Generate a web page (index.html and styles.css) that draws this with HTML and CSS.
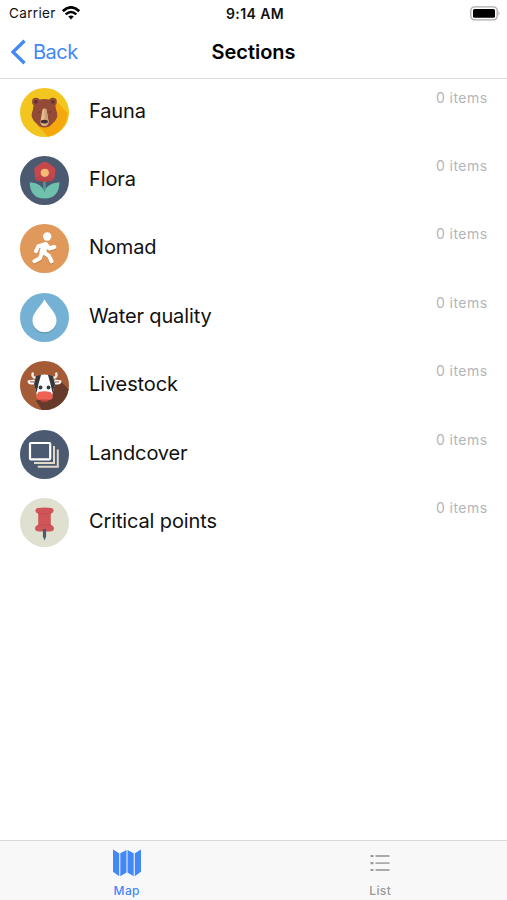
FILE: index.html
```html
<!DOCTYPE html>
<html lang="en">
<head>
<meta charset="utf-8">
<title>Sections</title>
<link rel="stylesheet" href="styles.css">
</head>
<body>
<div class="app">
  <div class="status">
    <div class="carrier"><span>Carrier</span>
      <svg width="18" height="14" viewBox="0 0 18 14"><path d="M.8 5.200Q9-2.400 17.200 5.200" fill="none" stroke="#000" stroke-width="2.800"/><path d="M3.700 8.400Q9 3.600 14.300 8.400" fill="none" stroke="#000" stroke-width="2.500"/><path d="M6.200 10.600Q9 8.300 11.800 10.600L9 13.400z"/></svg>
    </div>
    <div class="clock">9:14 AM</div>
    <svg class="battery" width="31" height="15" viewBox="0 0 31 15"><rect x=".8" y=".8" width="26.4" height="13" rx="3.7" fill="#fff" stroke="#aaa" stroke-width="1.3"/><rect x="3" y="3" width="22" height="8.7" rx="1.5"/><path d="M28.500 5q2.200 2.300 0 4.600z" fill="#aaa"/></svg>
  </div>
  <header class="nav">
    <a class="back"><svg width="16" height="26" viewBox="0 0 16 26"><path d="M14.500 1.700 3 13 14.500 24.300" fill="none" stroke="#4388f7" stroke-width="3.300"/></svg><span>Back</span></a>
    <h1>Sections</h1>
    <span></span>
  </header>
  <main class="list">
    <div class="row">
      <svg class="icon" viewBox="0 0 49 49"><circle cx="24.5" cy="24.5" r="24.5" fill="#f2c51f"/><path d="M34 11 47.500 25A24.500 24.500 0 0 1 28 48.700L17 37z" fill="#f5a80c"/><g fill="#934b37"><circle cx="16" cy="13.700" r="4"/><circle cx="32.800" cy="13.700" r="4"/><path d="M24.500 11C33.500 11 35.500 14.500 36 21.500q2 5 1 8-1.500 4-5 6.500Q29.500 39.500 24.500 39.500T17 36Q13.500 33.500 12 29.500q-1-3 1-8C13.500 14.500 15.500 11 24.500 11z"/></g><circle cx="16" cy="13.900" r="1.800" fill="#5e3434"/><circle cx="32.800" cy="13.900" r="1.800" fill="#5e3434"/><path d="M22.500 21.500q2-2 4 0L28.600 34q-.5 4-4.100 4T20.400 34z" fill="#e5bd91"/><path d="M24.500 20.500q1.200 0 2 1L28.600 34q-.5 4-4.100 4z" fill="#cfa17a"/><ellipse cx="24.300" cy="33.600" rx="3.600" ry="1.900" fill="#3c3030"/><circle cx="19" cy="24" r=".8" fill="#6a3430"/><circle cx="30" cy="24" r=".8" fill="#6a3430"/></svg>
      <span class="name">Fauna</span><span class="count">0 items</span>
    </div>
    <div class="row">
      <svg class="icon" viewBox="0 0 49 49"><circle cx="24.5" cy="24.5" r="24.5" fill="#4b5a71"/><path d="M24.500 24v16" stroke="#4b9991" stroke-width="2.800"/><path d="M9.700 26.300Q23 27.500 24.500 36.500 26 27.500 39.500 26.300 39 42.500 24.500 42.500T9.700 26.300z" fill="#6fc1ae"/><path d="M22 6.500q2.800-1.500 5.600 0l6.400 4.500q1.700 1.200 1.300 3.500l-.8 7q-.5 3-3.500 3.500l-4 .6q-2.200 1-4.400 0l-4-.6q-3-.5-3.500-3.500l-.8-7q-.4-2.300 1.300-3.500z" fill="#c5494c"/><path d="M24.800 16.500 34 22.500q-1 2.200-3.200 2.500l-6 1-6-1q-2.200-.3-3.200-2.500z" fill="#ae3c44" opacity=".4"/><circle cx="24.800" cy="16.800" r="4.100" fill="#f3bc72"/></svg>
      <span class="name">Flora</span><span class="count">0 items</span>
    </div>
    <div class="row">
      <svg class="icon" viewBox="0 0 49 49"><circle cx="24.5" cy="24.5" r="24.5" fill="#e0985b"/><g transform="translate(0 1)" fill="none" stroke="#c07e48" stroke-width="4" stroke-linecap="round" stroke-linejoin="round"><path id="walk" d="M26 20.200 18.300 22.200 16 27.300M26 20.200 29.300 24.500l5-1.500M24.500 20.500 22 28.500 20 34.200 14.400 37.300M23.500 28.200 29 32l2.500 5.300"/></g><g fill="none" stroke="#fff" stroke-width="4" stroke-linecap="round" stroke-linejoin="round"><use href="#walk"/><path d="M24.600 21.500 22.900 28" stroke-width="6.600"/></g><circle cx="27.200" cy="12.500" r="4.200" fill="#fff"/></svg>
      <span class="name">Nomad</span><span class="count">0 items</span>
    </div>
    <div class="row">
      <svg class="icon" viewBox="0 0 49 49"><circle cx="24.5" cy="24.5" r="24.5" fill="#75b1d4"/><path d="M24.500 7.200C28 14.500 36.600 20.500 36.600 28.200a12.100 12.100 0 0 1-24.200 0C12.400 20.500 21 14.500 24.500 7.200z" fill="#578ba8"/><path d="M24.500 6.200C28 13.500 36.600 19.500 36.600 27.200a12.100 12.100 0 0 1-24.200 0C12.400 19.500 21 13.500 24.500 6.200z" fill="#fff"/></svg>
      <span class="name">Water quality</span><span class="count">0 items</span>
    </div>
    <div class="row">
      <svg class="icon" viewBox="0 0 49 49"><circle cx="24.5" cy="24.5" r="24.5" fill="#a55b36"/><path d="M39 19 48.700 28A24.500 24.500 0 0 1 22 48.900L16 40z" fill="#673b2c"/><path d="M16.500 17Q11 16.500 13 11.500M32.500 17Q38 16.500 36 11.500" fill="none" stroke="#f4eddf" stroke-width="2.400"/><path d="M15 23Q7.500 25 7.500 19.500l7-1zM34 23q7.500 2 7.500-3.500l-7-1z" fill="#fff"/><path d="M10 21q3-.7 5 1M39 21q-3-.7-5 1" stroke="#d77d72" stroke-width="1.500" fill="none"/><path d="M16 15q8.500-3 17 0l2 7-3 13H17l-3-13z" fill="#fff"/><path d="M16 15q3-1.500 5-1l-2.500 9-2 9-2.500-9zM33 15q-3-1.500-5-1l2.500 9 2 9 2.500-9z" fill="#34373c"/><circle cx="20.500" cy="26.500" r="1.900" fill="#34373c"/><circle cx="28.500" cy="26.500" r="1.900" fill="#34373c"/><path d="M18.500 31q6-1.500 12 0 5 6-.5 8H19q-5.500-2-.5-8z" fill="#ee6253"/><path d="M19.500 38.500h10q-1.500 2.500-5 2.500t-5-2.500z" fill="#bd443e"/></svg>
      <span class="name">Livestock</span><span class="count">0 items</span>
    </div>
    <div class="row">
      <svg class="icon" viewBox="0 0 49 49"><circle cx="24.5" cy="24.5" r="24.5" fill="#4b5a71"/><g fill="none" stroke-width="2"><path d="M17.800 36.700h20V19.500M14 33h20V16" stroke="#ded9c8"/><rect x="10" y="13" width="20.200" height="16.300" rx=".7" stroke="#fff" stroke-width="2.200"/></g></svg>
      <span class="name">Landcover</span><span class="count">0 items</span>
    </div>
    <div class="row">
      <svg class="icon" viewBox="0 0 49 49"><circle cx="24.5" cy="24.5" r="24.5" fill="#dfe0d0"/><path d="M17.500 10Q24.500 8.800 31.500 10q2.500 1 2 3-.5 2.200-2.700 2.700v11q3.200 1 3.200 4.300-.5 2.200-4 2.500H19q-3.500-.3-4-2.500 0-3.300 3.200-4.300v-11q-2.200-.5-2.700-2.700-.5-2 2-3z" fill="#d05558"/><path d="M18 15.200q6.500 1.500 13 0M18.200 27.200q6.300-1 12.600 0" fill="none" stroke="#b94850" opacity=".6"/><path d="M22.900 31h3.200v7.500L24.500 42.500 22.900 38.500z" fill="#4b5a71"/></svg>
      <span class="name">Critical points</span><span class="count">0 items</span>
    </div>
  </main>
  <nav class="tabs">
    <a class="tab active"><svg width="30" height="28" viewBox="0 0 30 28" fill="#4388f7"><path d="M1 .5 7.200 4.300V27.300L1 22.700zM8.300 4.300 14.500 1v22.500l-6.200 3.800zM15.500 1 21.700 4.300v23L15.500 23.500zM22.800 4.300 29 .5V22.700l-6.200 4.600z"/></svg><span>Map</span></a>
    <a class="tab"><svg width="30" height="28" viewBox="0 0 30 28"><path d="M5.500 7h3M5.500 14.200h3M5.500 21h3" stroke="#999" stroke-width="2.200"/><path d="M10.500 7h14M10.500 14.200h14M10.500 21h14" stroke="#aaa" stroke-width="1.800"/></svg><span>List</span></a>
  </nav>
</div>
</body>
</html>
```
FILE: styles.css
```css
* { box-sizing: border-box; }
body { margin: 0; background: #fff; color: #111; font-family: Inter, "Liberation Sans", sans-serif; }
svg { display: block; flex: none; }
.app { height: 900px; display: flex; flex-direction: column; overflow: hidden; }
.status { height: 26px; padding: 0 6px 0 9px; display: grid; grid-template-columns: 1fr auto 1fr; align-items: center; font-size: 13.5px; }
.carrier { display: flex; align-items: center; gap: 6px; letter-spacing: .35px; }
.clock { font-size: 14px; font-weight: 600; letter-spacing: .4px; }
.battery { justify-self: end; }
.nav { height: 53px; padding: 0 10px 1px; display: grid; grid-template-columns: 1fr auto 1fr; align-items: center; border-bottom: 1px solid #dcdcdc; }
.back { display: flex; align-items: center; gap: 7px; color: #4388f7; font-size: 20px; letter-spacing: -.5px; }
h1 { margin: 0; color: #000; font-size: 20px; font-weight: 600; letter-spacing: 0; }
.list { flex: 1; }
.row { height: 68.43px; padding: 8.5px 19.5px 0 20px; display: flex; align-items: flex-start; }
.icon { width: 49px; height: 49px; }
.name { flex: 1; margin-left: 20px; line-height: 47px; font-size: 20px; letter-spacing: -.13px; }
.count { font-size: 14px; line-height: 19px; letter-spacing: .45px; color: #b5b5b8; }
.tabs { height: 60px; display: flex; background: #f8f8f8; border-top: 1px solid #d8d8d8; }
.tab { flex: 1; display: flex; flex-direction: column; align-items: center; gap: 6px; padding-top: 8px; color: #999; font-size: 12px; line-height: 16px; letter-spacing: .4px; font-weight: 500; }
.active { color: #4388f7; }
```
